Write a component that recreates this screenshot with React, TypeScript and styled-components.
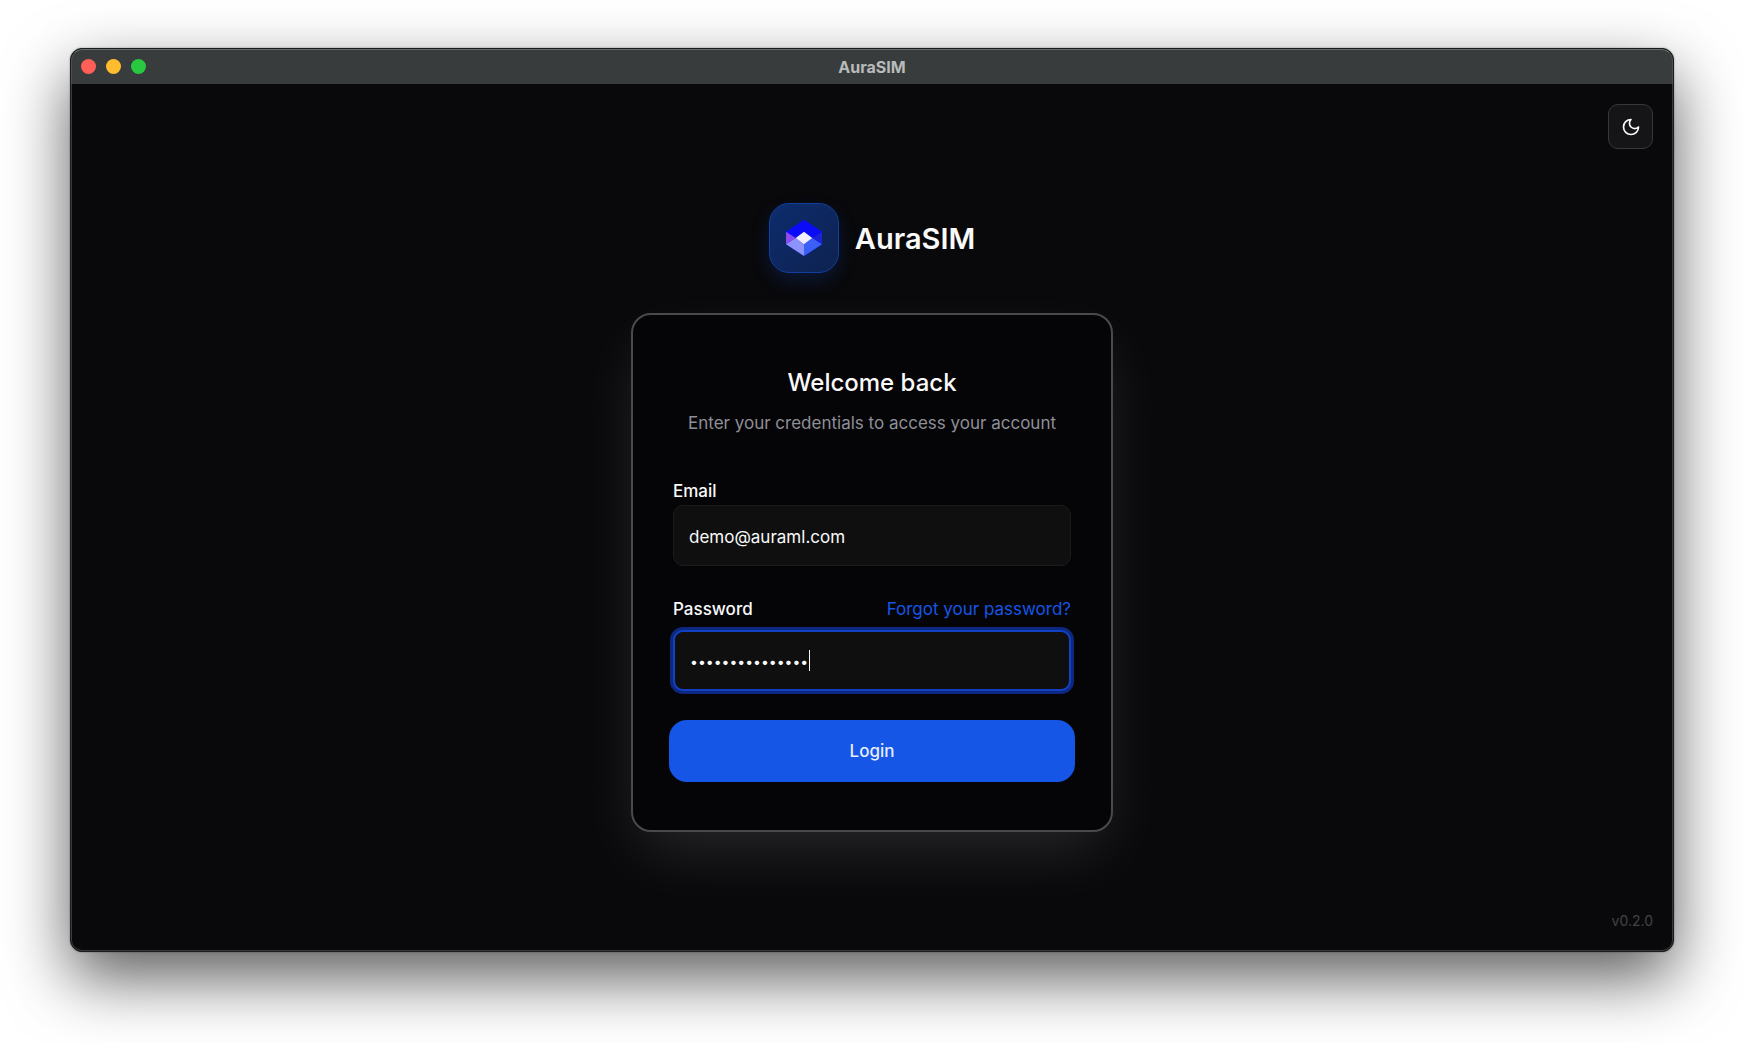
import React, { useId, useState } from "react";
import styled, { createGlobalStyle } from "styled-components";

const GlobalStyle = createGlobalStyle`
  *, *::before, *::after { box-sizing: border-box; }
  body {
    margin: 0;
    background: #ffffff;
    font-family: Inter, "Liberation Sans", sans-serif;
    -webkit-font-smoothing: antialiased;
  }
  button, input { font: inherit; }
`;

const Desktop = styled.div`
  display: flex;
  min-height: 100vh;
  padding: 48px 70px 91px;
`;

const Window = styled.section`
  flex: 1;
  min-width: 0;
  display: flex;
  flex-direction: column;
  border-radius: 12px;
  overflow: hidden;
  background: #09090b;
  border: 1px solid #1b1c1c;
  box-shadow: 0 26px 64px rgba(0, 0, 0, 0.64), 0 0 2px rgba(0, 0, 0, 0.4);
`;

const TitleBar = styled.header`
  display: grid;
  grid-template-columns: 1fr auto 1fr;
  align-items: center;
  height: 35px;
  padding: 0 9px 1px;
  background: #383c3c;
  border: 1px solid #4d5050;
  border-top-color: #6a6d6d;
  border-bottom: 0;
  border-radius: 11px 11px 0 0;
`;

const Lights = styled.div`
  display: flex;
  gap: 10px;
`;

const Light = styled.button<{ $color: string }>`
  width: 15px;
  height: 15px;
  padding: 0;
  border: 0;
  border-radius: 50%;
  background: ${(p) => p.$color};
`;

const WindowTitle = styled.span`
  color: #b9bbbb;
  font-size: 16px;
  line-height: 20px;
  font-weight: 700;
`;

const Screen = styled.div`
  flex: 1;
  display: grid;
  grid-template-rows: 1fr auto 1fr;
  padding: 20px 19px 19px;
  border: 1px solid #3a3a3c;
  border-top: 0;
  border-radius: 0 0 11px 11px;
`;

const TopBar = styled.div`
  display: flex;
  justify-content: flex-end;
  align-items: flex-start;
`;

const ThemeButton = styled.button`
  display: grid;
  place-items: center;
  width: 45px;
  height: 45px;
  padding: 0;
  color: #fafafa;
  background: #151517;
  border: 1px solid #38383b;
  border-radius: 10px;
`;

const Content = styled.main`
  display: flex;
  flex-direction: column;
  align-items: center;
  gap: 40px;
`;

const Brand = styled.div`
  display: flex;
  align-items: center;
  gap: 16px;
`;

const LogoTile = styled.div`
  display: grid;
  place-items: center;
  width: 70px;
  height: 70px;
  border: 1px solid #10409f;
  border-radius: 20px;
  background: linear-gradient(135deg, #0d2c6d, #0e2250);
  box-shadow: 0 8px 20px -2px rgba(21, 86, 230, 0.22);
`;

const BrandName = styled.h1`
  margin: 0;
  padding-top: 2px;
  color: #fafafa;
  font-size: 29px;
  line-height: 36px;
  font-weight: 600;
`;

const Card = styled.form`
  display: flex;
  flex-direction: column;
  width: 482px;
  max-width: 100%;
  padding: 48px 36px;
  border: 2px solid #4a4a4b;
  border-radius: 20px;
  background: #050507;
  box-shadow: 0 26px 64px -10px rgba(255, 255, 255, 0.13);
`;

const Heading = styled.h2`
  margin: 4px 0 10px;
  color: #fafafa;
  font-size: 24px;
  line-height: 32px;
  font-weight: 500;
  text-align: center;
`;

const Subtitle = styled.p`
  margin: 0 0 40px;
  color: #8f8f98;
  font-size: 17px;
  line-height: 28px;
  text-align: center;
`;

const Field = styled.div<{ $gap?: number }>`
  display: flex;
  flex-direction: column;
  gap: ${(p) => p.$gap ?? 0}px;
  margin: 0 4px 29px;
`;

const FieldHead = styled.div`
  display: flex;
  justify-content: space-between;
  font-size: 17px;
  line-height: 28px;
`;

const Label = styled.label`
  color: #fafafa;
  font-weight: 500;
`;

const ForgotLink = styled.a`
  color: #1556e6;
  text-decoration: none;
`;

const InputWrap = styled.div`
  position: relative;
  display: flex;
`;

const TextInput = styled.input`
  width: 100%;
  height: 61px;
  padding: 2px 15px 0;
  color: #fafafa;
  background: #0f0f0f;
  border: 1px solid #1c1c1e;
  border-radius: 10px;
  font-size: 17px;
  outline: none;

  &[type="password"] {
    font-size: 14px;
    caret-color: transparent;
  }

  &:focus {
    border: 2px solid #1341c4;
    box-shadow: 0 0 0 3px #0d2880;
  }
`;

const Caret = styled.span`
  position: absolute;
  top: 20px;
  width: 1px;
  height: 21px;
  background: #fafafa;
  pointer-events: none;
`;

const LoginButton = styled.button`
  height: 62px;
  color: #e6edfd;
  background: #1556e6;
  border: 0;
  border-radius: 18px;
  font-size: 17px;
  font-weight: 500;
`;

const Footer = styled.footer`
  display: flex;
  justify-content: flex-end;
  align-items: flex-end;
  color: #434346;
  font-size: 14px;
  line-height: 20px;
`;

const DOT_PITCH = 8;
const TEXT_INSET = 16;

function MoonIcon() {
  return (
    <svg
      width="20"
      height="20"
      viewBox="0 0 24 24"
      fill="none"
      stroke="currentColor"
      strokeWidth="2"
      strokeLinecap="round"
      strokeLinejoin="round"
      aria-hidden="true"
    >
      <path d="M12 3a6 6 0 0 0 9 9 9 9 0 1 1-9-9Z" />
    </svg>
  );
}

function Logo() {
  return (
    <svg width="36" height="36" viewBox="0 0 35 35" aria-hidden="true">
      <path d="M17.500 0 35 11.500V23.500L17.500 35 0 23.500V11.500Z" fill="#1212e6" />
      <path d="M17.500 0 35 11.500 25.500 17.500 17.500 11.500 9.500 17.500 0 11.500Z" fill="#0b0bf7" />
      <path d="M0 11.500 9.500 17.500 0 23.500Z" fill="#8a4cf0" />
      <path d="M35 11.500 25.500 17.500 35 23.500Z" fill="#1c22d6" />
      <path d="M9.500 17.500 17.500 23.500V35L0 23.500Z" fill="#8d93fb" />
      <path d="M25.500 17.500 17.500 23.500V35L35 23.500Z" fill="#3a60f7" />
      <path d="M17.500 11.500 25.500 17.500 17.500 23.500 9.500 17.500Z" fill="#f2f0ff" />
    </svg>
  );
}

export default function App() {
  const emailId = useId();
  const passwordId = useId();
  const [email, setEmail] = useState("demo@auraml.com");
  const [password, setPassword] = useState("aurasim-demo-01");
  const [focused, setFocused] = useState(true);

  return (
    <>
      <GlobalStyle />
      <Desktop>
        <Window>
          <TitleBar>
            <Lights>
              <Light $color="#ff5f57" aria-label="Close" />
              <Light $color="#febc2e" aria-label="Minimize" />
              <Light $color="#28c840" aria-label="Zoom" />
            </Lights>
            <WindowTitle>AuraSIM</WindowTitle>
          </TitleBar>
          <Screen>
            <TopBar>
              <ThemeButton type="button" aria-label="Toggle theme">
                <MoonIcon />
              </ThemeButton>
            </TopBar>
            <Content>
              <Brand>
                <LogoTile>
                  <Logo />
                </LogoTile>
                <BrandName>AuraSIM</BrandName>
              </Brand>
              <Card onSubmit={(e) => e.preventDefault()}>
                <Heading>Welcome back</Heading>
                <Subtitle>Enter your credentials to access your account</Subtitle>
                <Field>
                  <FieldHead>
                    <Label htmlFor={emailId}>Email</Label>
                  </FieldHead>
                  <TextInput
                    id={emailId}
                    type="email"
                    value={email}
                    onChange={(e) => setEmail(e.target.value)}
                  />
                </Field>
                <Field $gap={7}>
                  <FieldHead>
                    <Label htmlFor={passwordId}>Password</Label>
                    <ForgotLink href="#forgot">Forgot your password?</ForgotLink>
                  </FieldHead>
                  <InputWrap>
                    <TextInput
                      id={passwordId}
                      type="password"
                      value={password}
                      onChange={(e) => setPassword(e.target.value)}
                      onFocus={() => setFocused(true)}
                      onBlur={() => setFocused(false)}
                      autoFocus
                    />
                    {focused && (
                      <Caret style={{ left: TEXT_INSET + password.length * DOT_PITCH }} />
                    )}
                  </InputWrap>
                </Field>
                <LoginButton type="submit">Login</LoginButton>
              </Card>
            </Content>
            <Footer>v0.2.0</Footer>
          </Screen>
        </Window>
      </Desktop>
    </>
  );
}
